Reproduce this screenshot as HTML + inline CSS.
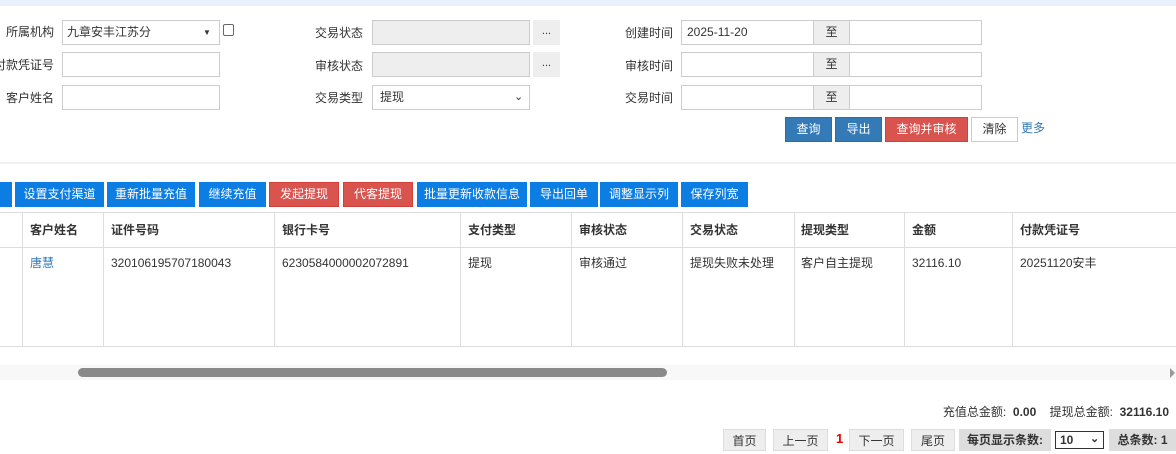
<!DOCTYPE html>
<html><head><meta charset="utf-8"><style>
*{margin:0;padding:0;box-sizing:border-box}
body{width:1176px;height:454px;overflow:hidden;background:#fff;font-family:"Liberation Sans","Noto Sans CJK SC",sans-serif;font-size:12px;color:#333;position:relative}
.a{position:absolute}
.lbl{position:absolute;text-align:right;font-size:12px;color:#333;line-height:24px;white-space:nowrap}
.inp{position:absolute;border:1px solid #ccc;background:#fff;height:25px;line-height:23px;padding-left:5px;font-size:12px}
.gry{background:#eee}
.dots{position:absolute;background:#eee;width:27px;height:25px;text-align:center;line-height:22px;font-size:11px}
.zhi{position:absolute;background:#eee;border:1px solid #ccc;width:37px;height:25px;text-align:center;line-height:23px;font-size:12px}
.b{position:absolute;top:182px;height:25px;line-height:25px;color:#fff;text-align:center;font-size:12px;background:#0b7de3}
.r{background:#d9534f;border:1px solid #d43f3a;line-height:23px}
.q{position:absolute;top:117px;height:25px;line-height:23px;color:#fff;text-align:center;font-size:12px;background:#337ab7;border:1px solid #2e6da4}
.vl{position:absolute;top:212px;width:1px;height:134px;background:#ddd}
.th{position:absolute;top:212px;line-height:36px;font-weight:bold;font-size:12px;color:#333}
.td{position:absolute;top:252px;line-height:22px;font-size:12px;color:#333}
.pg{position:absolute;top:429px;height:22px;line-height:22px;background:#eee;border:1px solid #ddd;text-align:center;font-size:12px}
</style></head><body>
<div class="a" style="left:0;top:0;width:1176px;height:6px;background:#e8f1fb"></div>

<div class="lbl" style="left:-30px;top:20px;width:84px">所属机构</div>
<div class="inp" style="left:62px;top:20px;width:158px;padding-left:4px">九章安丰江苏分<span class="a" style="left:140px;top:0;font-size:8px">▼</span></div>
<div class="a" style="left:223px;top:24px;width:11px;height:12px;border:1px solid #666;border-radius:2px"></div>
<div class="lbl" style="left:-30px;top:53px;width:84px">付款凭证号</div>
<div class="inp" style="left:62px;top:52px;width:158px"></div>
<div class="lbl" style="left:-30px;top:86px;width:84px">客户姓名</div>
<div class="inp" style="left:62px;top:85px;width:158px"></div>

<div class="lbl" style="left:300px;top:21px;width:63px">交易状态</div>
<div class="inp gry" style="left:372px;top:20px;width:158px"></div>
<div class="dots" style="left:533px;top:20px">...</div>
<div class="lbl" style="left:300px;top:54px;width:63px">审核状态</div>
<div class="inp gry" style="left:372px;top:52px;width:158px"></div>
<div class="dots" style="left:533px;top:52px">...</div>
<div class="lbl" style="left:300px;top:86px;width:63px">交易类型</div>
<div class="inp" style="left:372px;top:85px;width:158px;padding-left:7px">提现<span class="a" style="left:141px;top:0;font-size:11px">⌄</span></div>

<div class="lbl" style="left:600px;top:21px;width:73px">创建时间</div>
<div class="inp" style="left:681px;top:20px;width:133px">2025-11-20</div>
<div class="zhi" style="left:813px;top:20px">至</div>
<div class="inp" style="left:849px;top:20px;width:133px"></div>
<div class="lbl" style="left:600px;top:54px;width:73px">审核时间</div>
<div class="inp" style="left:681px;top:52px;width:133px"></div>
<div class="zhi" style="left:813px;top:52px">至</div>
<div class="inp" style="left:849px;top:52px;width:133px"></div>
<div class="lbl" style="left:600px;top:86px;width:73px">交易时间</div>
<div class="inp" style="left:681px;top:85px;width:133px"></div>
<div class="zhi" style="left:813px;top:85px">至</div>
<div class="inp" style="left:849px;top:85px;width:133px"></div>

<div class="q" style="left:785px;width:47px">查询</div>
<div class="q" style="left:835px;width:47px">导出</div>
<div class="q" style="left:885px;width:83px;background:#d9534f;border-color:#d43f3a">查询并审核</div>
<div class="q" style="left:971px;width:47px;background:#fff;border-color:#ccc;color:#333">清除</div>
<div class="a" style="left:1021px;top:119px;color:#337ab7;font-size:12px">更多</div>

<div class="a" style="left:0;top:162px;width:1176px;height:2px;background:#eef1f5"></div>

<div class="b" style="left:0;width:12px"></div>
<div class="b" style="left:15px;width:89px">设置支付渠道</div>
<div class="b" style="left:107px;width:88px">重新批量充值</div>
<div class="b" style="left:199px;width:67px">继续充值</div>
<div class="b r" style="left:269px;width:70px">发起提现</div>
<div class="b r" style="left:343px;width:70px">代客提现</div>
<div class="b" style="left:417px;width:110px">批量更新收款信息</div>
<div class="b" style="left:530px;width:68px">导出回单</div>
<div class="b" style="left:600px;width:78px">调整显示列</div>
<div class="b" style="left:681px;width:67px">保存列宽</div>

<div class="a" style="left:0;top:212px;width:1176px;height:1px;background:#ddd"></div>
<div class="a" style="left:0;top:247px;width:1176px;height:1px;background:#ddd"></div>
<div class="a" style="left:0;top:346px;width:1176px;height:1px;background:#ddd"></div>
<div class="vl" style="left:22px"></div><div class="vl" style="left:103px"></div><div class="vl" style="left:274px"></div><div class="vl" style="left:460px"></div><div class="vl" style="left:571px"></div><div class="vl" style="left:682px"></div><div class="vl" style="left:794px"></div><div class="vl" style="left:904px"></div><div class="vl" style="left:1012px"></div>
<div class="th" style="left:30px">客户姓名</div><div class="th" style="left:111px">证件号码</div><div class="th" style="left:282px">银行卡号</div><div class="th" style="left:468px">支付类型</div><div class="th" style="left:579px">审核状态</div><div class="th" style="left:690px">交易状态</div><div class="th" style="left:801px">提现类型</div><div class="th" style="left:912px">金额</div><div class="th" style="left:1020px">付款凭证号</div>
<div class="td" style="left:30px;color:#337ab7">唐慧</div><div class="td" style="left:111px">320106195707180043</div><div class="td" style="left:282px">6230584000002072891</div><div class="td" style="left:468px">提现</div><div class="td" style="left:579px">审核通过</div><div class="td" style="left:690px">提现失败未处理</div><div class="td" style="left:801px">客户自主提现</div><div class="td" style="left:912px">32116.10</div><div class="td" style="left:1020px">20251120安丰</div>

<div class="a" style="left:0;top:365px;width:1176px;height:15px;background:#f8f8f8"></div>
<div class="a" style="left:78px;top:368px;width:589px;height:9px;background:#8a8a8a;border-radius:5px"></div>
<div class="a" style="left:1170px;top:368px;width:0;height:0;border-top:5px solid transparent;border-bottom:5px solid transparent;border-left:5px solid #999"></div>

<div class="a" style="right:7px;top:403px;font-size:12px;white-space:nowrap">充值总金额: &nbsp;<b>0.00</b> &nbsp; &nbsp;提现总金额: &nbsp;<b>32116.10</b></div>

<div class="pg" style="left:723px;width:43px">首页</div>
<div class="pg" style="left:773px;width:55px">上一页</div>
<div class="a" style="left:836px;top:431px;color:#e00;font-weight:bold;font-size:13px">1</div>
<div class="pg" style="left:849px;width:55px">下一页</div>
<div class="pg" style="left:911px;width:44px">尾页</div>
<div class="pg" style="left:959px;width:92px;background:#ddd;border:none;font-weight:bold">每页显示条数:</div>
<div class="a" style="left:1055px;top:431px;width:49px;height:18px;border:1px solid #333;font-weight:bold;font-size:12px;line-height:16px;padding-left:4px">10<span class="a" style="left:34px;top:-1px;font-size:11px">⌄</span></div>
<div class="pg" style="left:1109px;width:67px;background:#ddd;border:none;font-weight:bold">总条数: 1</div>
</body></html>
